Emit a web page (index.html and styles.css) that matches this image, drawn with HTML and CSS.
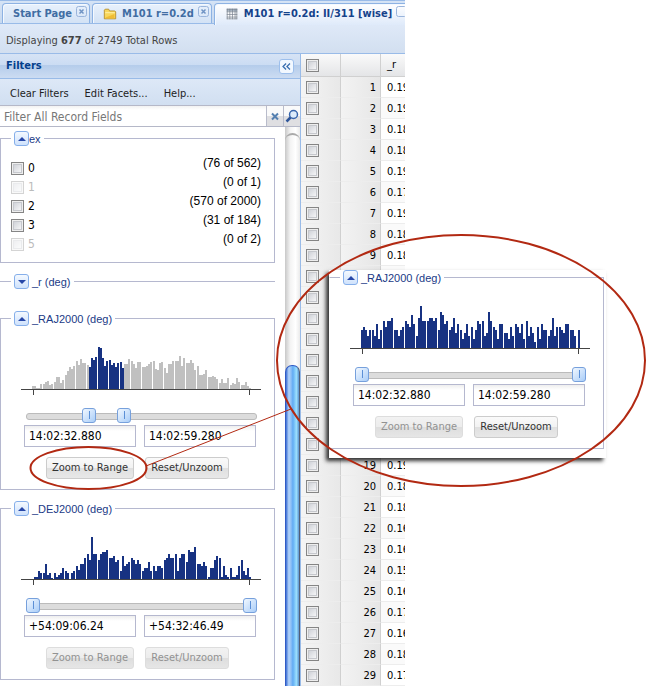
FILE: index.html
```html
<!DOCTYPE html>
<html lang="en">
<head>
<meta charset="utf-8">
<title>M101 r=0.2d: II/311 [wise]</title>
<link rel="stylesheet" href="styles.css">
</head>
<body>
<div class="stage">
  <main class="app">
    <nav class="tabs">
      <div class="tab"><a href="#start">Start Page</a><button class="close" aria-label="Close Start Page"><svg viewBox="0 0 11 11"><rect x=".5" y=".5" width="10" height="10" rx="2"/><path d="M3.5 3.5l4 4M7.5 3.5l-4 4"/></svg></button></div>
      <div class="tab"><svg class="tab-icon" viewBox="0 0 16 16"><path d="M1.500 13.500v-10l1-1h4l1 2h6l1 1v8z" fill="#f8d75a" stroke="#b58d2b"/><path d="M2.500 6.500h11" stroke="#fff3b0"/><path d="M3 12l10-4v5H3z" fill="#efbc35"/></svg><a href="#m101">M101 r=0.2d</a><button class="close" aria-label="Close M101"><svg viewBox="0 0 11 11"><rect x=".5" y=".5" width="10" height="10" rx="2"/><path d="M3.5 3.5l4 4M7.5 3.5l-4 4"/></svg></button></div>
      <div class="tab active"><svg class="tab-icon" viewBox="0 0 16 16"><path d="M2 2h12v12H2z" fill="#fff"/><path d="M2 2h12v3H2z" fill="#a9b6c4"/><path d="M2.500 2v12M5.500 2v12M8.500 2v12M11.500 2v12M13.500 2v12M2 2.500h12M2 5.500h12M2 8.500h12M2 11.500h12M2 13.500h12" stroke="#75808c" stroke-width=".8"/></svg><a href="#wise">M101 r=0.2d: II/311 [wise]</a><button class="close" aria-label="Close wise"><svg viewBox="0 0 11 11"><rect x=".5" y=".5" width="10" height="10" rx="2"/></svg></button></div>
    </nav>
    <p class="status">Displaying <b>677</b> of 2749 Total Rows</p>
    <div class="body">
      <aside class="sidebar">
        <header class="panel-title"><h2>Filters</h2><button class="collapse" aria-label="Collapse filters"><svg viewBox="0 0 15 15"><path d="M7 4L3.500 7.500 7 11M11.500 4L8 7.500 11.500 11"/></svg></button></header>
        <div class="toolbar"><button>Clear Filters</button><button>Edit Facets...</button><button>Help...</button></div>
        <div class="search">
          <input type="text" placeholder="Filter All Record Fields" aria-label="Filter All Record Fields">
          <button aria-label="Clear"><svg viewBox="0 0 16 19"><path d="M5 6.500l6 6M11 6.500l-6 6" stroke="#5580b0" stroke-width="2"/></svg></button>
          <button aria-label="Search"><svg viewBox="0 0 16 19"><circle cx="9.500" cy="7.500" r="4" fill="#dcebfb" stroke="#3865ac" stroke-width="1.500"/><path d="M6.500 10.500l-4 4" stroke="#2f5699" stroke-width="2.500"/></svg></button>
        </div>
        <div class="scroller">
          <div class="facets">
            <fieldset class="facet tight">
              <legend><button class="toggle" aria-label="Collapse ex"></button>ex</legend>
              <div class="options">
                <ul class="choices">
                  <li><label><input type="checkbox">0</label></li>
                  <li><label><input type="checkbox" disabled>1</label></li>
                  <li><label><input type="checkbox">2</label></li>
                  <li><label><input type="checkbox">3</label></li>
                  <li><label><input type="checkbox" disabled>5</label></li>
                </ul>
                <ul class="counts"><li>(76 of 562)</li><li>(0 of 1)</li><li>(570 of 2000)</li><li>(31 of 184)</li><li>(0 of 2)</li></ul>
              </div>
            </fieldset>
            <fieldset class="facet collapsed">
              <legend><button class="toggle down" aria-label="Expand _r"></button>_r (deg)</legend>
            </fieldset>
            <fieldset class="facet">
              <legend><button class="toggle" aria-label="Collapse _RAJ2000"></button>_RAJ2000 (deg)</legend>
              <svg class="histogram" data-series="raj" viewBox="0 0 240 70"></svg>
              <div class="slider"><input type="range" value="26" aria-label="Minimum"><input type="range" value="42" aria-label="Maximum"></div>
              <div class="bounds"><input type="text" value="14:02:32.880" aria-label="From"><input type="text" value="14:02:59.280" aria-label="To"></div>
              <div class="actions"><button class="zoom">Zoom to Range</button><button class="reset">Reset/Unzoom</button></div>
            </fieldset>
            <fieldset class="facet">
              <legend><button class="toggle" aria-label="Collapse _DEJ2000"></button>_DEJ2000 (deg)</legend>
              <svg class="histogram" data-series="dej" viewBox="0 0 240 70"></svg>
              <div class="slider"><input type="range" value="0" aria-label="Minimum"><input type="range" value="100" aria-label="Maximum"></div>
              <div class="bounds"><input type="text" value="+54:09:06.24" aria-label="From"><input type="text" value="+54:32:46.49" aria-label="To"></div>
              <div class="actions"><button class="zoom" disabled>Zoom to Range</button><button class="reset" disabled>Reset/Unzoom</button></div>
            </fieldset>
          </div>
          <div class="scrollbar"><div class="thumb"></div></div>
        </div>
      </aside>
      <section class="records">
        <table>
          <thead><tr><th class="pick"><input type="checkbox" aria-label="Select all rows"></th><th class="num"></th><th class="val">_r</th></tr></thead>
          <tbody id="rows"></tbody>
        </table>
      </section>
    </div>
  </main>
  <section class="callout">
    <fieldset class="facet">
      <legend><button class="toggle" aria-label="Collapse _RAJ2000"></button>_RAJ2000 (deg)</legend>
      <svg class="histogram" data-series="zoomed" viewBox="0 0 240 70"></svg>
      <div class="slider"><input type="range" value="0" aria-label="Minimum"><input type="range" value="100" aria-label="Maximum"></div>
      <div class="bounds"><input type="text" value="14:02:32.880" aria-label="From"><input type="text" value="14:02:59.280" aria-label="To"></div>
      <div class="actions"><button class="zoom" disabled>Zoom to Range</button><button class="reset">Reset/Unzoom</button></div>
    </fieldset>
  </section>
  <svg class="annotation" viewBox="0 0 652 686" width="652" height="686">
    <ellipse cx="461" cy="360.500" rx="184" ry="125.500"/>
    <ellipse cx="88.500" cy="468" rx="58" ry="21"/>
    <path d="M146 466L291 409"/>
  </svg>
</div>
<script src="app.js"></script>
</body>
</html>
```
FILE: styles.css
```css
* { box-sizing: border-box; }
body { margin: 0; background: #fff; color: #111; font: 11px/14px "DejaVu Sans Condensed", "DejaVu Sans", sans-serif; }
button, input { font: inherit; color: inherit; margin: 0; }
button { padding: 0; border: 0; background: none; }
ul { list-style: none; margin: 0; padding: 0; }
svg { display: block; fill: none; }

.stage { position: relative; }
.app { margin-right: 247px; overflow: hidden; background: #fff; }

.tabs { display: flex; gap: 2px; height: 24px; padding: 2px 0 0 2px; border-top: 1px solid #99bbe8; border-bottom: 1px solid #99bbe8; background: linear-gradient(#d5e3f5, #c7d9f0); }
.tab { flex: none; display: flex; align-items: center; height: 20px; padding: 0 2px 0 10px; border: 1px solid #8db2e3; border-bottom: 0; border-radius: 4px 4px 0 0; background: linear-gradient(#e8f1fc, #d3e2f5); box-shadow: inset 1px 1px #f4f9ff; font-weight: bold; white-space: nowrap; }
.tab a { color: #416da3; text-decoration: none; }
.tab.active { height: 22px; padding-bottom: 2px; background: linear-gradient(#fff, #dfeafa); }
.tab.active a { color: #15428b; }
.tab-icon { width: 14px; height: 14px; margin-right: 5px; }
.close { align-self: flex-start; width: 11px; height: 11px; margin: 2px 0 0 4px; }
.close svg { stroke: #9ab5dc; stroke-width: 1; }
.close path { stroke: #6f93c4; stroke-width: 1.500; }
.status { height: 30px; margin: 0; padding: 10px 6px 0; border-bottom: 1px solid #99bbe8; background: linear-gradient(#dfe9f8, #d2dff0); color: #444; }

.body { display: flex; }
.sidebar { flex: none; width: 301px; border-right: 1px solid #99bbe8; }
.panel-title { display: flex; align-items: center; justify-content: space-between; height: 25px; padding: 0 6px; border-bottom: 1px solid #99bbe8; background: linear-gradient(#d6e3f5 0, #cbdcf3 45%, #b4cceb 46%, #ccdcf2 100%); }
.panel-title h2 { margin: 0; font-size: 11px; color: #04408c; }
.collapse { width: 15px; height: 15px; border: 1px solid #9dbfec; border-radius: 3px; background: #f2f8ff; }
.collapse svg { width: 13px; stroke: #3a6fb0; stroke-width: 1.500; }
.toolbar { display: flex; gap: 16px; height: 27px; padding: 3px 10px 0; border-bottom: 1px solid #b5b8c8; background: linear-gradient(#dde8f7, #d1dff1); color: #222; }
.search { display: flex; height: 21px; border-bottom: 1px solid #b5b8c8; }
.search input { flex: 1; min-width: 0; padding: 2px 4px 0; border: 0; font-size: 12px; background: linear-gradient(#f2f2f2, #fff 4px); }
.search input::placeholder { color: #777; opacity: 1; }
.search button { width: 17px; border-left: 1px solid #b9bccb; background: linear-gradient(#fafafa 50%, #dfdfe2 50%); }

.scroller { display: flex; }
.facets { flex: 1; min-width: 0; padding: 4px 10px 0 0; }
.facet { min-width: 0; margin: 0 0 11px; padding: 0 10px 10px; border: 1px solid #b5b8cf; font-family: "Liberation Sans", Arial, sans-serif; color: #1b3a86; }
.facet legend { display: flex; align-items: center; gap: 3px; height: 15px; padding: 0 3px; }
.tight legend { gap: 0; }
.facet.tight { padding: 0 10px 8px; }
.facet.collapsed { height: 26px; padding: 0 11px; border-width: 1px 0 0; }
.toggle { flex: none; display: grid; place-items: center; width: 15px; height: 15px; border: 1px solid #86afea; border-radius: 3px; background: linear-gradient(#f4f9ff, #cfe2fc); }
.toggle::before { content: ""; border: 4px solid transparent; border-top: 0; border-bottom: 4px solid #2647a8; }
.toggle.down::before { border: 4px solid transparent; border-bottom: 0; border-top: 4px solid #2647a8; }

.options { display: flex; justify-content: space-between; padding: 8px 3px 0 0; font-size: 12px; color: #000; }
.options li { height: 19px; line-height: 19px; }
.choices { padding-top: 5px; font-family: "DejaVu Sans Condensed", sans-serif; }
.choices label { display: flex; align-items: center; gap: 4px; }
.choices li:has(:disabled) { color: #bbb; }
.counts { text-align: right; }
input[type="checkbox"] { appearance: none; flex: none; display: block; width: 13px; height: 13px; border: 1px solid #858585; background: linear-gradient(135deg, #c6c9d0, #fff); box-shadow: inset 0 0 0 1px #eee, inset 0 0 0 2px #c6c8cd; }
input[type="checkbox"]:disabled { opacity: .35; }

.histogram { width: 240px; height: 70px; margin: 0 0 0 10px; shape-rendering: crispEdges; }
.histogram .axis { stroke: #444; }
.histogram .bin { fill: #c0c0c0; }
.histogram .bin.selected { fill: #173282; }
.slider { position: relative; height: 14px; margin: 12px 7px 3px 15px; }
.slider::before { content: ""; display: block; position: relative; top: 5px; height: 5px; border: 1px solid #bbb; border-radius: 3px; background: #dcdcdc; }
.slider input { position: absolute; inset: 0; width: 100%; height: 14px; appearance: none; background: none; pointer-events: none; }
.slider input::-webkit-slider-thumb { appearance: none; pointer-events: auto; width: 14px; height: 15px; border: 1px solid #76a0dc; border-radius: 3px; background: linear-gradient(#5b8fd6, #5b8fd6) center / 1px 8px no-repeat, linear-gradient(135deg, #f2f8ff, #a9cdf8); }
.bounds { display: flex; gap: 8px; margin: 0 8px 10px 13px; font-family: "DejaVu Sans Condensed", sans-serif; color: #000; }
.bounds input { flex: 1; min-width: 0; height: 22px; padding: 0 4px; border: 1px solid #b5b8cf; background: linear-gradient(#eee, #fff 5px); font-size: 12px; }
.actions { display: flex; justify-content: center; gap: 11px; font-family: "DejaVu Sans Condensed", sans-serif; color: #333; }
.actions button { height: 22px; border: 1px solid #ccc; border-radius: 3px; background: linear-gradient(#fafafa, #f2f2f2 50%, #e0e0e0 52%, #e8e8e8); }
.actions .zoom { width: 88px; }
.actions .reset { width: 84px; }
.actions button:disabled { color: #929292; border-color: #ddd; background: linear-gradient(#f2f2f2, #ececec 50%, #dedede 52%, #e6e6e6); }

.scrollbar { flex: none; width: 15px; padding-top: 6px; background: linear-gradient(90deg, #c8c8c8, #f3f3f3 35%, #fff 70%, #eaeaea); }
.scrollbar::before { content: ""; display: block; height: 230px; border-top: 2px solid #aaa; border-radius: 8px 8px 0 0; }
.thumb { height: 323px; border: 1px solid #315bc5; border-right-color: #525f78; border-bottom: 0; border-radius: 7px 7px 0 0; background: linear-gradient(90deg, #3c6fd4, #b5d4fa 22%, #73b3f4 48%, #5faaf3 52%, #9be0ff 80%, #5c93cd); }

.records { flex: 1; min-width: 0; overflow: hidden; }
table { width: 130px; table-layout: fixed; border-collapse: separate; border-spacing: 0; font-size: 11px; color: #000; }
th, td { height: 21px; padding: 0; border-bottom: 1px solid #ededed; font-weight: normal; line-height: 14px; }
th { height: 23px; border-bottom: 1px solid #d0d0d0; border-right: 1px solid #d0d0d0; background: linear-gradient(#fafafa, #e4e5e7); }
.pick { width: 40px; padding-left: 5px; }
.num { width: 40px; padding-right: 4px; text-align: right; }
td.pick { background: linear-gradient(90deg, #f5f5f5, #e8e8e8); border-right: 1px solid #d0d0d0; }
td.num { background: linear-gradient(90deg, #f3f3f3, #e6e6e6); border-right: 1px solid #d0d0d0; }
td.num, td.val { padding-top: 1px; }
.val { padding-left: 6px; text-align: left; }
tbody tr:nth-child(even) .val { background: #fafafa; }

.callout { position: absolute; left: 329px; top: 270px; width: 277px; padding: 0 2px 9px 0; background: #fff; box-shadow: -3px 3px 4px rgba(0, 0, 0, .8); }
.callout .facet { margin: 0; border-left-color: transparent; }
.annotation { position: absolute; left: 0; top: 0; pointer-events: none; stroke: #b22912; stroke-width: 2; }
.annotation path { stroke-width: 1; }
```
FILE: app.js
```js
const series = {
  raj: {
    selected: [26, 41],
    bins: [3,3,1,1,5, 5,7,8,4,5, 7,12,12,6,9, 14,18,22,20,23, 28,24,30,26,26, 24,22,31,29,32,
      42,41,31,23,28, 29,24,26,22,26, 27,21,25,25,30, 28,25,21,27,27, 22,22,23,25,27,
      28,20,19,26,27, 21,16,25,25,28, 28,28,33,23,31, 26,26,29,26,19, 23,14,14,15,19,
      12,12,13,12,10, 6,10,6,6,11, 4,6,5,11,7, 4,4,7,3,1]
  },
  dej: {
    selected: [0, 99],
    bins: [0,2,2,8,6, 6,15,4,6,1, 6,2,4,6,11, 8,6,0,6,8, 13,9,15,15,21, 25,19,42,25,25,
      19,25,27,27,29, 21,21,23,17,19, 8,23,13,15,17, 21,19,15,19,15, 8,11,11,17,8,
      13,8,13,13,11, 19,21,25,21,21, 25,8,21,25,25, 17,29,27,27,32, 15,15,13,17,13,
      2,11,11,19,23, 21,2,13,4,2, 11,2,2,4,13, 19,8,4,11,2]
  },
  zoomed: {
    selected: [0, 99],
    bins: [18,21,18,12,18, 18,12,24,9,18, 27,21,27,27,30, 18,18,12,18,21, 27,24,21,33,24,
      12,30,42,27,27, 27,30,30,27,30, 18,36,33,24,27, 18,21,30,15,24, 18,9,15,24,12,
      21,9,18,27,24, 27,12,15,36,27, 21,18,9,24,24, 15,15,9,21,12, 24,21,15,24,9,
      27,12,21,15,6, 21,9,24,18,18, 12,18,30,12,21, 21,18,15,24,24, 18,18,12,0,18]
  }
};

const NS = "http://www.w3.org/2000/svg";
const add = (svg, name, attrs) => {
  const el = document.createElementNS(NS, name);
  for (const key in attrs) el.setAttribute(key, attrs[key]);
  svg.append(el);
};
document.querySelectorAll(".histogram").forEach(svg => {
  const { bins, selected } = series[svg.dataset.series];
  bins.forEach((h, i) => {
    const x = 11 + Math.floor(i / 5) * 11 + (i % 5) * 2;
    const on = i >= selected[0] && i <= selected[1];
    add(svg, "rect", { class: on ? "bin selected" : "bin", x, y: 63 - h, width: 2, height: h });
  });
  add(svg, "path", { class: "axis", d: "M0 63.5H240M12.5 63V69M228.5 63V69" });
});

const values = "19 19 18 18 19 17 19 18 18 18 18 18 18 18 18 18 18 18 19 18 18 16 16 15 16 17 16 18 17".split(" ");
document.getElementById("rows").innerHTML = values.map((v, i) =>
  `<tr><td class="pick"><input type="checkbox" aria-label="Select row ${i + 1}"></td><td class="num">${i + 1}</td><td class="val">0.${v}</td></tr>`
).join("");
```
